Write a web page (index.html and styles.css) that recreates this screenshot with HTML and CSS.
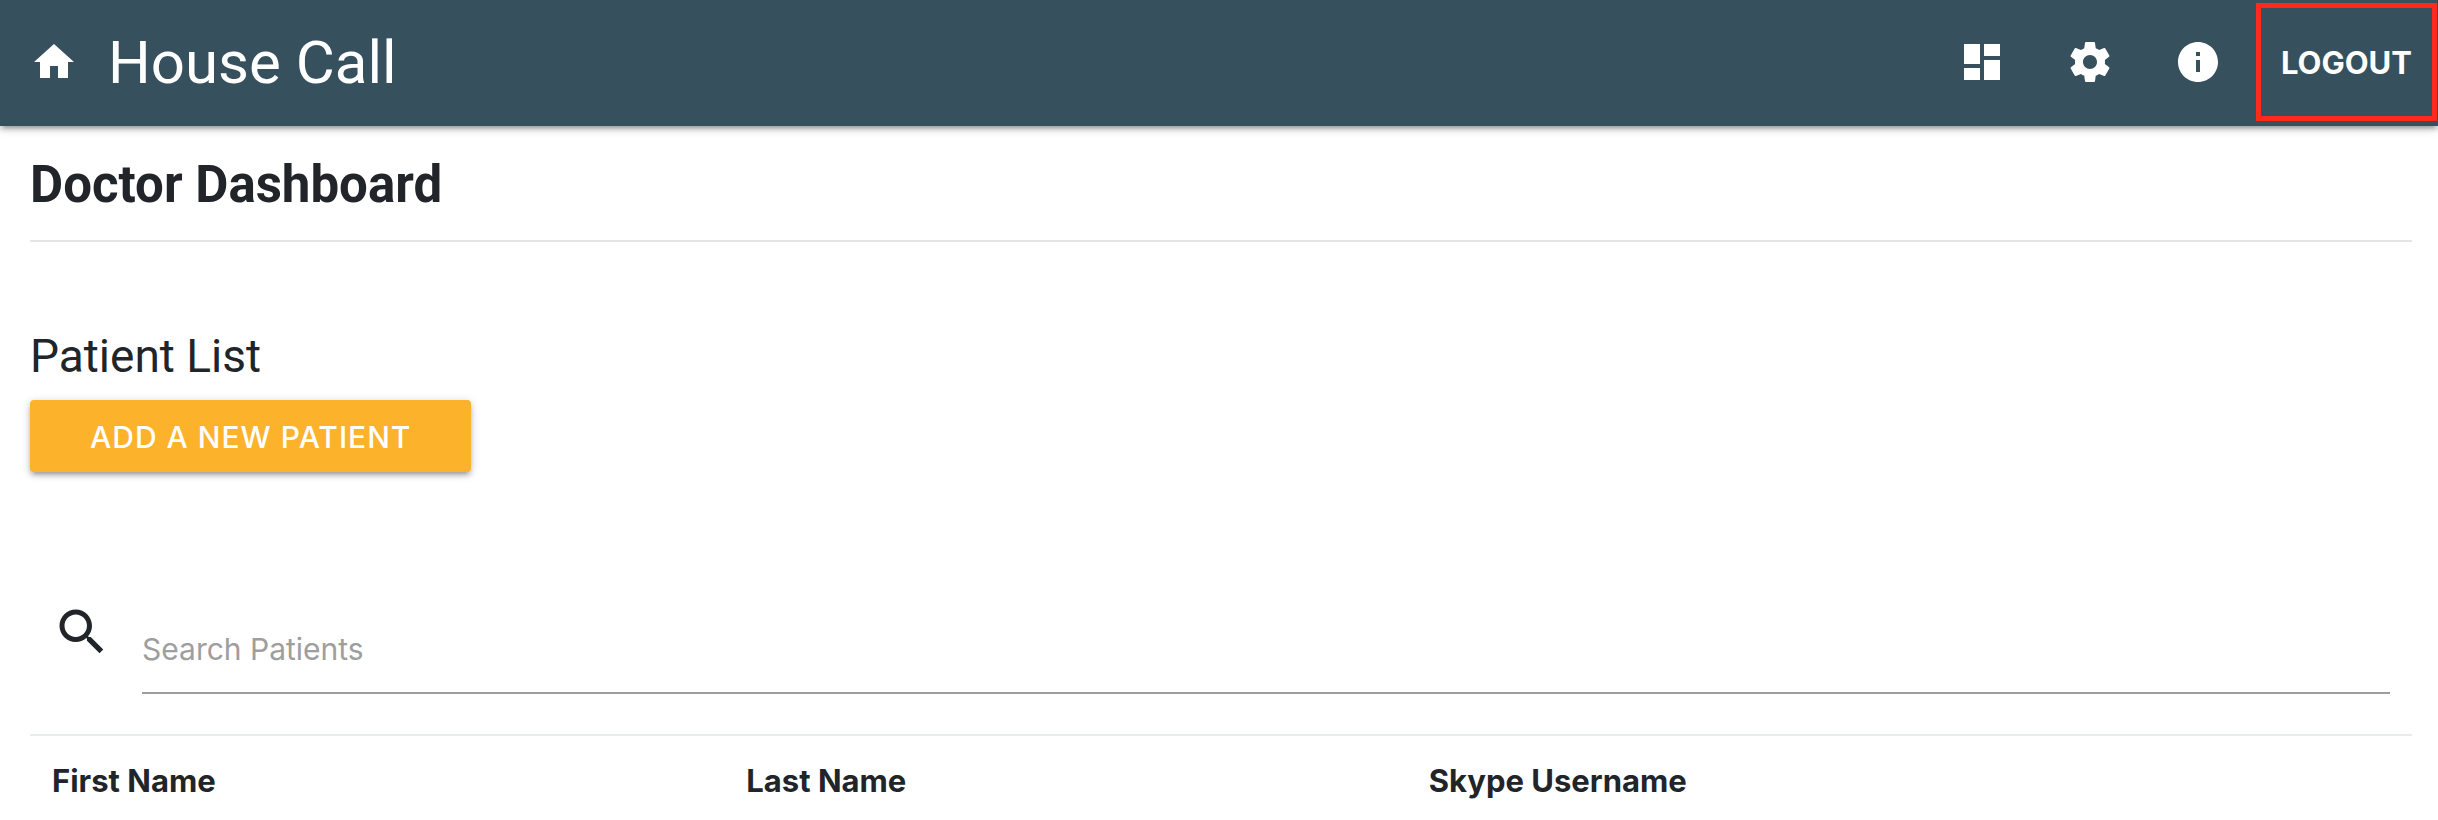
FILE: index.html
```html
<!DOCTYPE html>
<html lang="en">
<head>
<meta charset="utf-8">
<title>House Call</title>
<link rel="stylesheet" href="styles.css">
</head>
<body>
<header class="topbar">
  <a class="topbar-icon" href="#" aria-label="Home"><svg viewBox="0 0 24 24"><path d="M10 20v-6h4v6h5v-8h3L12 3 2 12h3v8z"/></svg></a>
  <a class="brand" href="#">House Call</a>
  <nav class="topbar-nav">
    <a class="topbar-icon" href="#" aria-label="Dashboard"><svg viewBox="0 0 24 24"><path d="M3 13h8V3H3v10zm0 8h8v-6H3v6zm10 0h8V11h-8v10zm0-18v6h8V3h-8z"/></svg></a>
    <a class="topbar-icon" href="#" aria-label="Settings"><svg viewBox="0 0 24 24"><path d="M19.43 12.98c.04-.32.07-.64.07-.98s-.03-.66-.07-.98l2.11-1.65c.19-.15.24-.42.12-.64l-2-3.46c-.12-.22-.39-.3-.61-.22l-2.49 1c-.52-.4-1.08-.73-1.69-.98l-.38-2.65C14.46 2.18 14.25 2 14 2h-4c-.25 0-.46.18-.49.42l-.38 2.65c-.61.25-1.17.59-1.69.98l-2.49-1c-.23-.09-.49 0-.61.22l-2 3.46c-.13.22-.07.49.12.64l2.11 1.65c-.04.32-.07.65-.07.98s.03.66.07.98l-2.11 1.65c-.19.15-.24.42-.12.64l2 3.46c.12.22.39.3.61.22l2.49-1c.52.4 1.08.73 1.69.98l.38 2.65c.03.24.24.42.49.42h4c.25 0 .46-.18.49-.42l.38-2.65c.61-.25 1.17-.59 1.69-.98l2.49 1c.23.09.49 0 .61-.22l2-3.46c.12-.22.07-.49-.12-.64l-2.11-1.65zM12 15.5c-1.93 0-3.5-1.57-3.5-3.5s1.57-3.5 3.5-3.5 3.5 1.57 3.5 3.5-1.57 3.5-3.5 3.5z"/></svg></a>
    <a class="topbar-icon" href="#" aria-label="About"><svg viewBox="0 0 24 24"><path d="M12 2C6.48 2 2 6.48 2 12s4.480 10 10 10 10-4.480 10-10S17.520 2 12 2zm1 15h-2v-6h2v6zm0-8h-2V7h2v2z"/></svg></a>
    <a class="logout" href="#">LOGOUT</a>
  </nav>
</header>
<main class="page">
  <h1 class="page-title">Doctor Dashboard</h1>
  <hr class="rule">
  <h2 class="section-title">Patient List</h2>
  <button class="add-button" type="button">ADD A NEW PATIENT</button>
  <div class="search">
    <label class="search-label" for="search" aria-label="Search Patients"><svg class="search-icon" viewBox="0 0 24 24"><path d="M15.5 14h-.79l-.28-.27C15.410 12.590 16 11.110 16 9.500 16 5.910 13.090 3 9.500 3S3 5.910 3 9.500 5.910 16 9.500 16c1.610 0 3.090-.59 4.230-1.570l.27.28v.79l5 4.990L20.490 19l-4.990-5zm-6 0C7.010 14 5 11.990 5 9.500S7.010 5 9.500 5 14 7.010 14 9.500 11.990 14 9.500 14z"/></svg></label>
    <input class="search-input" id="search" type="text" placeholder="Search Patients">
  </div>
  <table class="patients">
    <thead>
      <tr><th class="col-first" scope="col">First Name</th><th class="col-last" scope="col">Last Name</th><th scope="col">Skype Username</th></tr>
    </thead>
  </table>
</main>
</body>
</html>
```
FILE: styles.css
```css
* { box-sizing: border-box; }
body {
  margin: 0;
  background: #fff;
  color: #212529;
  font-family: Inter, "Liberation Sans", sans-serif;
  font-size: 30px;
  line-height: 44px;
}
a { color: inherit; text-decoration: none; }
svg { display: block; fill: currentColor; }

.topbar {
  display: flex;
  align-items: center;
  height: 126px;
  padding-bottom: 2px;
  background: #36515d;
  color: #fff;
  box-shadow: 0 4px 4px 0 rgba(0, 0, 0, .14), 0 6px 2px -4px rgba(0, 0, 0, .12), 0 2px 10px 0 rgba(0, 0, 0, .2);
}
.topbar-icon { padding: 0 30px; }
.topbar-icon svg { width: 48px; height: 48px; }
.brand, .page-title, .section-title { font-family: Roboto, Inter, sans-serif; }
.brand { padding-top: 2px; font-size: 60px; line-height: 80px; }
.topbar-nav { display: flex; align-items: center; margin-left: auto; }
.logout {
  display: flex;
  align-items: center;
  height: 118px;
  margin: 0 1px 0 4px;
  padding: 2px 20px 0;
  border: 5px solid #ff2a1c;
  font-size: 31px;
  font-weight: 700;
}

.page { padding: 29px 26px 0 30px; }
.page-title, .section-title { margin: 0; line-height: 60px; }
.page-title { font-size: 51px; font-weight: 700; }
.section-title { font-size: 46px; font-weight: 400; }
.rule { height: 2px; margin: 25px 0 84px; border: 0; background: #e5e5e5; }
.add-button {
  display: block;
  height: 72px;
  margin-top: 14px;
  padding: 2px 60px 0;
  border: 0;
  border-radius: 4px;
  background: #fdb22b;
  color: #fff;
  font: inherit;
  font-weight: 500;
  letter-spacing: 1px;
  box-shadow: 0 4px 4px 0 rgba(0, 0, 0, .14), 0 6px 2px -4px rgba(0, 0, 0, .12), 0 2px 10px 0 rgba(0, 0, 0, .2);
}
.search { display: flex; gap: 30px; margin: 130px 22px 40px; }
.search-icon { width: 60px; height: 60px; }
.search-input {
  flex: 1;
  min-width: 0;
  height: 92px;
  padding: 4px 0 0;
  border: 0;
  border-bottom: 2px solid #9e9e9e;
  background: none;
  color: inherit;
  font: inherit;
}
.search-input::placeholder { color: #9e9e9e; opacity: 1; }

.patients { width: 100%; border-collapse: separate; border-spacing: 0; table-layout: fixed; }
.patients th {
  padding: 23px 22px 12px;
  border-top: 2px solid #e9ecef;
  font-size: 31px;
  font-weight: 700;
  text-align: left;
}
.col-first { width: 29.15%; }
.col-last { width: 28.65%; }
```
